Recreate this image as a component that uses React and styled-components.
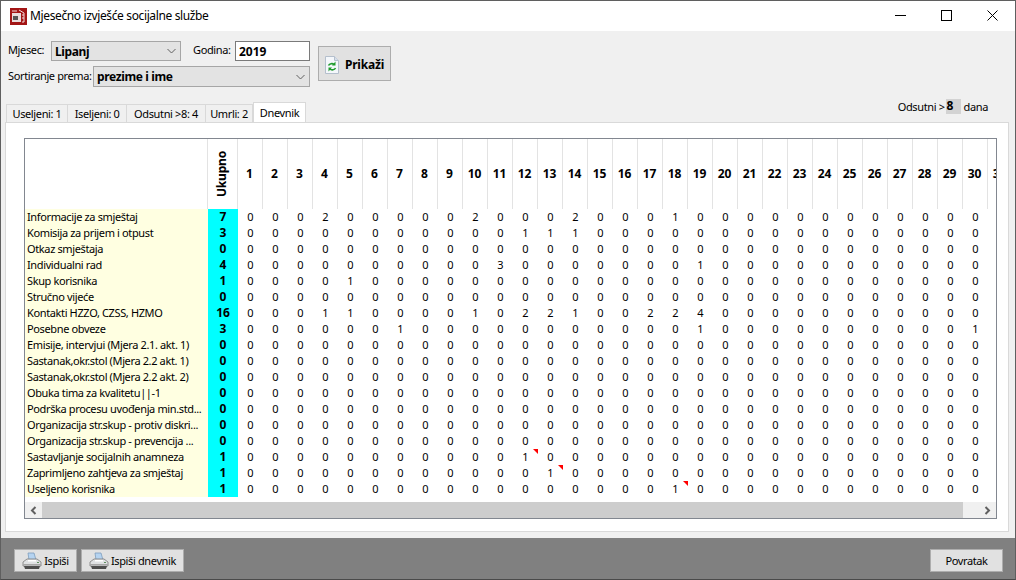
import React from 'react';
import styled, { createGlobalStyle } from 'styled-components';

const FONT = '"Noto Sans", "Liberation Sans", sans-serif';

const ROWS = [
  { name: 'Informacije za smještaj', total: 7, days: { 4: 2, 10: 2, 14: 2, 18: 1 } },
  { name: 'Komisija za prijem i otpust', total: 3, days: { 12: 1, 13: 1, 14: 1 } },
  { name: 'Otkaz smještaja', total: 0 },
  { name: 'Individualni rad', total: 4, days: { 11: 3, 19: 1 } },
  { name: 'Skup korisnika', total: 1, days: { 5: 1 } },
  { name: 'Stručno vijeće', total: 0 },
  { name: 'Kontakti HZZO, CZSS, HZMO', total: 16, days: { 4: 1, 5: 1, 10: 1, 12: 2, 13: 2, 14: 1, 17: 2, 18: 2, 19: 4 } },
  { name: 'Posebne obveze', total: 3, days: { 7: 1, 19: 1, 30: 1 } },
  { name: 'Emisije, intervjui (Mjera 2.1. akt. 1)', total: 0 },
  { name: 'Sastanak,okr.stol (Mjera 2.2 akt. 1)', total: 0 },
  { name: 'Sastanak,okr.stol (Mjera 2.2 akt. 2)', total: 0 },
  { name: 'Obuka tima za kvalitetu||-1', total: 0 },
  { name: 'Podrška procesu uvođenja min.std...', total: 0 },
  { name: 'Organizacija str.skup - protiv diskri...', total: 0 },
  { name: 'Organizacija str.skup - prevencija ...', total: 0 },
  { name: 'Sastavljanje socijalnih anamneza', total: 1, days: { 12: 1 }, flag: 12 },
  { name: 'Zaprimljeno zahtjeva za smještaj', total: 1, days: { 13: 1 }, flag: 13 },
  { name: 'Useljeno korisnika', total: 1, days: { 18: 1 }, flag: 18 },
];

const DAYS = Array.from({ length: 31 }, (_, i) => i + 1);

const TABS = [
  { label: 'Useljeni: 1', width: 62 },
  { label: 'Iseljeni: 0', width: 59 },
  { label: 'Odsutni >8: 4', width: 79 },
  { label: 'Umrli: 2', width: 47 },
  { label: 'Dnevnik', width: 53, active: true },
];

const GlobalStyle = createGlobalStyle`
  html, body {
    margin: 0;
    padding: 0;
    background: #808080;
  }
  * {
    box-sizing: border-box;
  }
`;

const Window = styled.div`
  width: 1016px;
  height: 580px;
  display: flex;
  flex-direction: column;
  overflow: hidden;
  border: 1px solid #5f5f5f;
  border-bottom: 1px solid #4a4a4a;
  background: #f0f0f0;
  color: #000;
  font: 11px/14px ${FONT};
  letter-spacing: -0.37px;
`;

const TitleBar = styled.div`
  height: 30px;
  flex: none;
  display: flex;
  align-items: center;
  background: #fff;
  padding-left: 9px;
`;

const Title = styled.div`
  margin-left: 3px;
  font-size: 12px;
`;

const WindowControls = styled.div`
  margin-left: auto;
  display: flex;
`;

const WindowControl = styled.div`
  width: 46px;
  height: 30px;
  padding-bottom: 2px;
  display: flex;
  align-items: center;
  justify-content: center;
`;

const Content = styled.div`
  flex: 1;
  min-height: 0;
  display: flex;
  flex-direction: column;
  padding: 10px 6px 0 4px;
`;

const Filters = styled.div`
  height: 60px;
  flex: none;
  display: flex;
  padding-left: 3px;
`;

const FilterFields = styled.div`
  width: 302px;
  display: flex;
  flex-direction: column;
  gap: 5px;
`;

const FilterRow = styled.div`
  display: flex;
  align-items: center;
`;

const Label = styled.span`
  flex: none;
  width: ${p => p.$width}px;
  margin-left: ${p => p.$offset || 0}px;
  padding-bottom: 2px;
  white-space: nowrap;
`;

const Select = styled.div`
  width: ${p => p.$width}px;
  height: ${p => p.$height}px;
  flex: none;
  display: flex;
  align-items: center;
  justify-content: space-between;
  padding: 0 4px 0 3px;
  background: #e3e3e3;
  border: 1px solid #a6a6a6;
  font: bold 12px ${FONT};
`;

const YearInput = styled.div`
  width: 75px;
  height: 20px;
  flex: none;
  display: flex;
  align-items: center;
  padding-left: 3px;
  background: #fff;
  border: 1px solid #7a7a7a;
  font: bold 12px ${FONT};
  letter-spacing: 0;
`;

const Button = styled.div`
  flex: none;
  display: flex;
  align-items: center;
  justify-content: center;
  gap: ${p => p.$gap ?? 2}px;
  width: ${p => p.$width}px;
  height: ${p => p.$height}px;
  background: #e1e1e1;
  border: 1px solid #adadad;
`;

const ShowButton = styled(Button)`
  margin: 5px 0 0 8px;
  padding-top: 2px;
  font-weight: bold;
  font-size: 12px;
  letter-spacing: -0.2px;
`;

const TabStrip = styled.div`
  height: 21px;
  flex: none;
  display: flex;
  align-items: flex-end;
  padding-left: 1px;
`;

const Tab = styled.div`
  width: ${p => p.$width}px;
  height: ${p => (p.$active ? 20 : 18)}px;
  display: flex;
  align-items: center;
  justify-content: center;
  border: 1px solid #d9d9d9;
  border-left-width: ${p => (p.$active ? 1 : 0)}px;
  border-bottom: 0;
  background: ${p => (p.$active ? '#fff' : '#f0f0f0')};
  &:first-child {
    border-left-width: 1px;
  }
`;

const AbsenceNote = styled.div`
  margin-left: auto;
  align-self: flex-start;
  margin-right: 21px;
  display: flex;
  align-items: center;
  height: 15px;
  margin-top: -2px;
`;

const AbsenceValue = styled.span`
  width: 15px;
  height: 15px;
  margin: 0 3px 0 1px;
  padding-left: 1px;
  background: #d3d3d3;
  font-weight: bold;
  font-size: 12px;
  line-height: 13px;
`;

const TabPanel = styled.div`
  flex: 1;
  min-height: 0;
  margin-bottom: 6px;
  padding: 15px 11px 13px 18px;
  background: #fff;
  border: 1px solid #d9d9d9;
`;

const GridBox = styled.div`
  height: 381px;
  display: flex;
  flex-direction: column;
  overflow: hidden;
  border: 1px solid #828790;
`;

const GridBody = styled.div`
  flex: 1;
  min-height: 0;
  overflow: hidden;
`;

const Row = styled.div`
  display: grid;
  grid-template-columns: 183px 30px repeat(31, 25px);
  width: 988px;
  height: ${p => p.$height}px;
`;

const HeaderCell = styled.div`
  display: flex;
  align-items: center;
  justify-content: center;
  border-right: 1px solid #e3e3e3;
  font-weight: bold;
  font-size: 12px;
  letter-spacing: 0;
  white-space: nowrap;
  padding-right: 1px;
`;

const VerticalHeading = styled.span`
  writing-mode: vertical-rl;
  transform: rotate(180deg);
  letter-spacing: -0.2px;
`;

const NameCell = styled.div`
  padding-left: 2px;
  background: #ffffe1;
  white-space: nowrap;
  overflow: hidden;
  line-height: 16px;
`;

const TotalCell = styled.div`
  background: #00ffff;
  text-align: center;
  font-weight: bold;
  font-size: 12px;
  line-height: 16px;
  letter-spacing: 0;
`;

const DayCell = styled.div`
  position: relative;
  text-align: center;
  line-height: 16px;
  letter-spacing: 0;
`;

const CommentFlag = styled.span`
  position: absolute;
  top: 0;
  right: 0;
  width: 5px;
  height: 5px;
  background: #f00;
  clip-path: polygon(0 0, 100% 0, 100% 100%);
`;

const ScrollBar = styled.div`
  height: 16px;
  flex: none;
  display: flex;
  background: #f0f0f0;
`;

const ScrollArrow = styled.div`
  width: 17px;
  display: flex;
  align-items: center;
  justify-content: center;
`;

const ScrollThumb = styled.div`
  width: 921px;
  background: #cdcdcd;
`;

const ScrollTrack = styled.div`
  flex: 1;
`;

const Footer = styled.div`
  height: 41px;
  flex: none;
  display: flex;
  align-items: flex-start;
  gap: 4px;
  padding: 11px 12px 0 13px;
  background: #808080;
`;

const FooterSpacer = styled.div`
  flex: 1;
`;

function AppIcon() {
  return (
    <svg width="17" height="17" viewBox="0 0 17 17">
      <rect width="17" height="17" fill="#a31515" />
      <rect x="2" y="5" width="9" height="9" fill="#e8dcdc" />
      <rect x="3" y="8" width="5" height="4" fill="#555" />
      <path d="M2 3h5M9 2l5 3v9h-2M12 7h2M12 10h2" stroke="#f3dede" strokeWidth="1" fill="none" />
    </svg>
  );
}

function Chevron() {
  return (
    <svg width="9" height="6" viewBox="0 0 9 6">
      <path d="M.5 1l4 4 4-4" fill="none" stroke="#606060" strokeWidth="1" />
    </svg>
  );
}

function RefreshIcon() {
  return (
    <svg width="14" height="18" viewBox="0 0 14 18">
      <path d="M.5.5h9l4 4v13H.5z" fill="#f4f7fb" stroke="#b4bfcc" />
      <path d="M9.500.5v4h4" fill="#d6dfeb" stroke="#b4bfcc" />
      <path d="M3.500 9.500c1-2 4-2.500 5.500-1M10.500 12c-1 2-4 2.500-5.500 1" fill="none" stroke="#1e9b2c" strokeWidth="1.600" />
      <path d="M10.500 5.500v4h-3.500zM3.500 15.500v-4h3.500z" fill="#1e9b2c" />
    </svg>
  );
}

function PrinterIcon() {
  return (
    <svg width="20" height="18" viewBox="0 0 20 18">
      <path d="M6 1h6l2 7H7z" fill="#b5d3f0" stroke="#7d9dbd" strokeWidth=".8" />
      <path d="M1 10l4-3h10l4 3v4H1z" fill="#dfe1e3" stroke="#7a7a7a" strokeWidth=".8" />
      <path d="M6 8h8v1.500H6z" fill="#fff" />
      <path d="M1 12h18v1H1z" fill="#a6a6a6" />
      <path d="M2 14h16l-1 3H3z" fill="#4d4d4d" />
      <path d="M15 10.500h2" stroke="#5f8f5f" />
    </svg>
  );
}

function ScrollChevron({ right }) {
  return (
    <svg width="7" height="9" viewBox="0 0 7 9">
      <path d={right ? 'M1.500 1l3.500 3.500L1.500 8' : 'M5.500 1L2 4.500 5.500 8'} fill="none" stroke="#606060" strokeWidth="2" />
    </svg>
  );
}

export default function App() {
  return (
    <Window>
      <GlobalStyle />
      <TitleBar>
        <AppIcon />
        <Title>Mjesečno izvješće socijalne službe</Title>
        <WindowControls>
          <WindowControl>
            <svg width="11" height="11" viewBox="0 0 11 11"><path d="M0 5.500h11" stroke="#000" /></svg>
          </WindowControl>
          <WindowControl>
            <svg width="11" height="11" viewBox="0 0 11 11"><rect x=".5" y=".5" width="10" height="10" fill="none" stroke="#000" /></svg>
          </WindowControl>
          <WindowControl>
            <svg width="11" height="11" viewBox="0 0 11 11"><path d="M.5.5l10 10M10.500.5l-10 10" stroke="#000" /></svg>
          </WindowControl>
        </WindowControls>
      </TitleBar>

      <Content>
        <Filters>
          <FilterFields>
            <FilterRow>
              <Label $width={43}>Mjesec:</Label>
              <Select $width={130} $height={20}>
                Lipanj
                <Chevron />
              </Select>
              <Label $width={42} $offset={12}>Godina:</Label>
              <YearInput>2019</YearInput>
            </FilterRow>
            <FilterRow>
              <Label $width={85}>Sortiranje prema:</Label>
              <Select $width={217} $height={21}>
                prezime i ime
                <Chevron />
              </Select>
            </FilterRow>
          </FilterFields>
          <ShowButton $width={73} $height={35} $gap={6}>
            <RefreshIcon />
            Prikaži
          </ShowButton>
        </Filters>

        <TabStrip>
          {TABS.map(tab => (
            <Tab key={tab.label} $width={tab.width} $active={tab.active}>
              {tab.label}
            </Tab>
          ))}
          <AbsenceNote>
            Odsutni &gt;<AbsenceValue>8</AbsenceValue>dana
          </AbsenceNote>
        </TabStrip>

        <TabPanel>
          <GridBox>
            <GridBody>
              <Row $height={70}>
                <HeaderCell />
                <HeaderCell>
                  <VerticalHeading>Ukupno</VerticalHeading>
                </HeaderCell>
                {DAYS.map(day => (
                  <HeaderCell key={day}>{day}</HeaderCell>
                ))}
              </Row>
              {ROWS.map(row => (
                <Row key={row.name} $height={16}>
                  <NameCell>{row.name}</NameCell>
                  <TotalCell>{row.total}</TotalCell>
                  {DAYS.slice(0, 30).map(day => (
                    <DayCell key={day}>
                      {row.days?.[day] ?? 0}
                      {row.flag === day && <CommentFlag />}
                    </DayCell>
                  ))}
                </Row>
              ))}
            </GridBody>
            <ScrollBar>
              <ScrollArrow>
                <ScrollChevron />
              </ScrollArrow>
              <ScrollThumb />
              <ScrollTrack />
              <ScrollArrow>
                <ScrollChevron right />
              </ScrollArrow>
            </ScrollBar>
          </GridBox>
        </TabPanel>
      </Content>

      <Footer>
        <Button $width={63} $height={23}>
          <PrinterIcon />
          Ispiši
        </Button>
        <Button $width={103} $height={23}>
          <PrinterIcon />
          Ispiši dnevnik
        </Button>
        <FooterSpacer />
        <Button $width={73} $height={23}>Povratak</Button>
      </Footer>
    </Window>
  );
}
